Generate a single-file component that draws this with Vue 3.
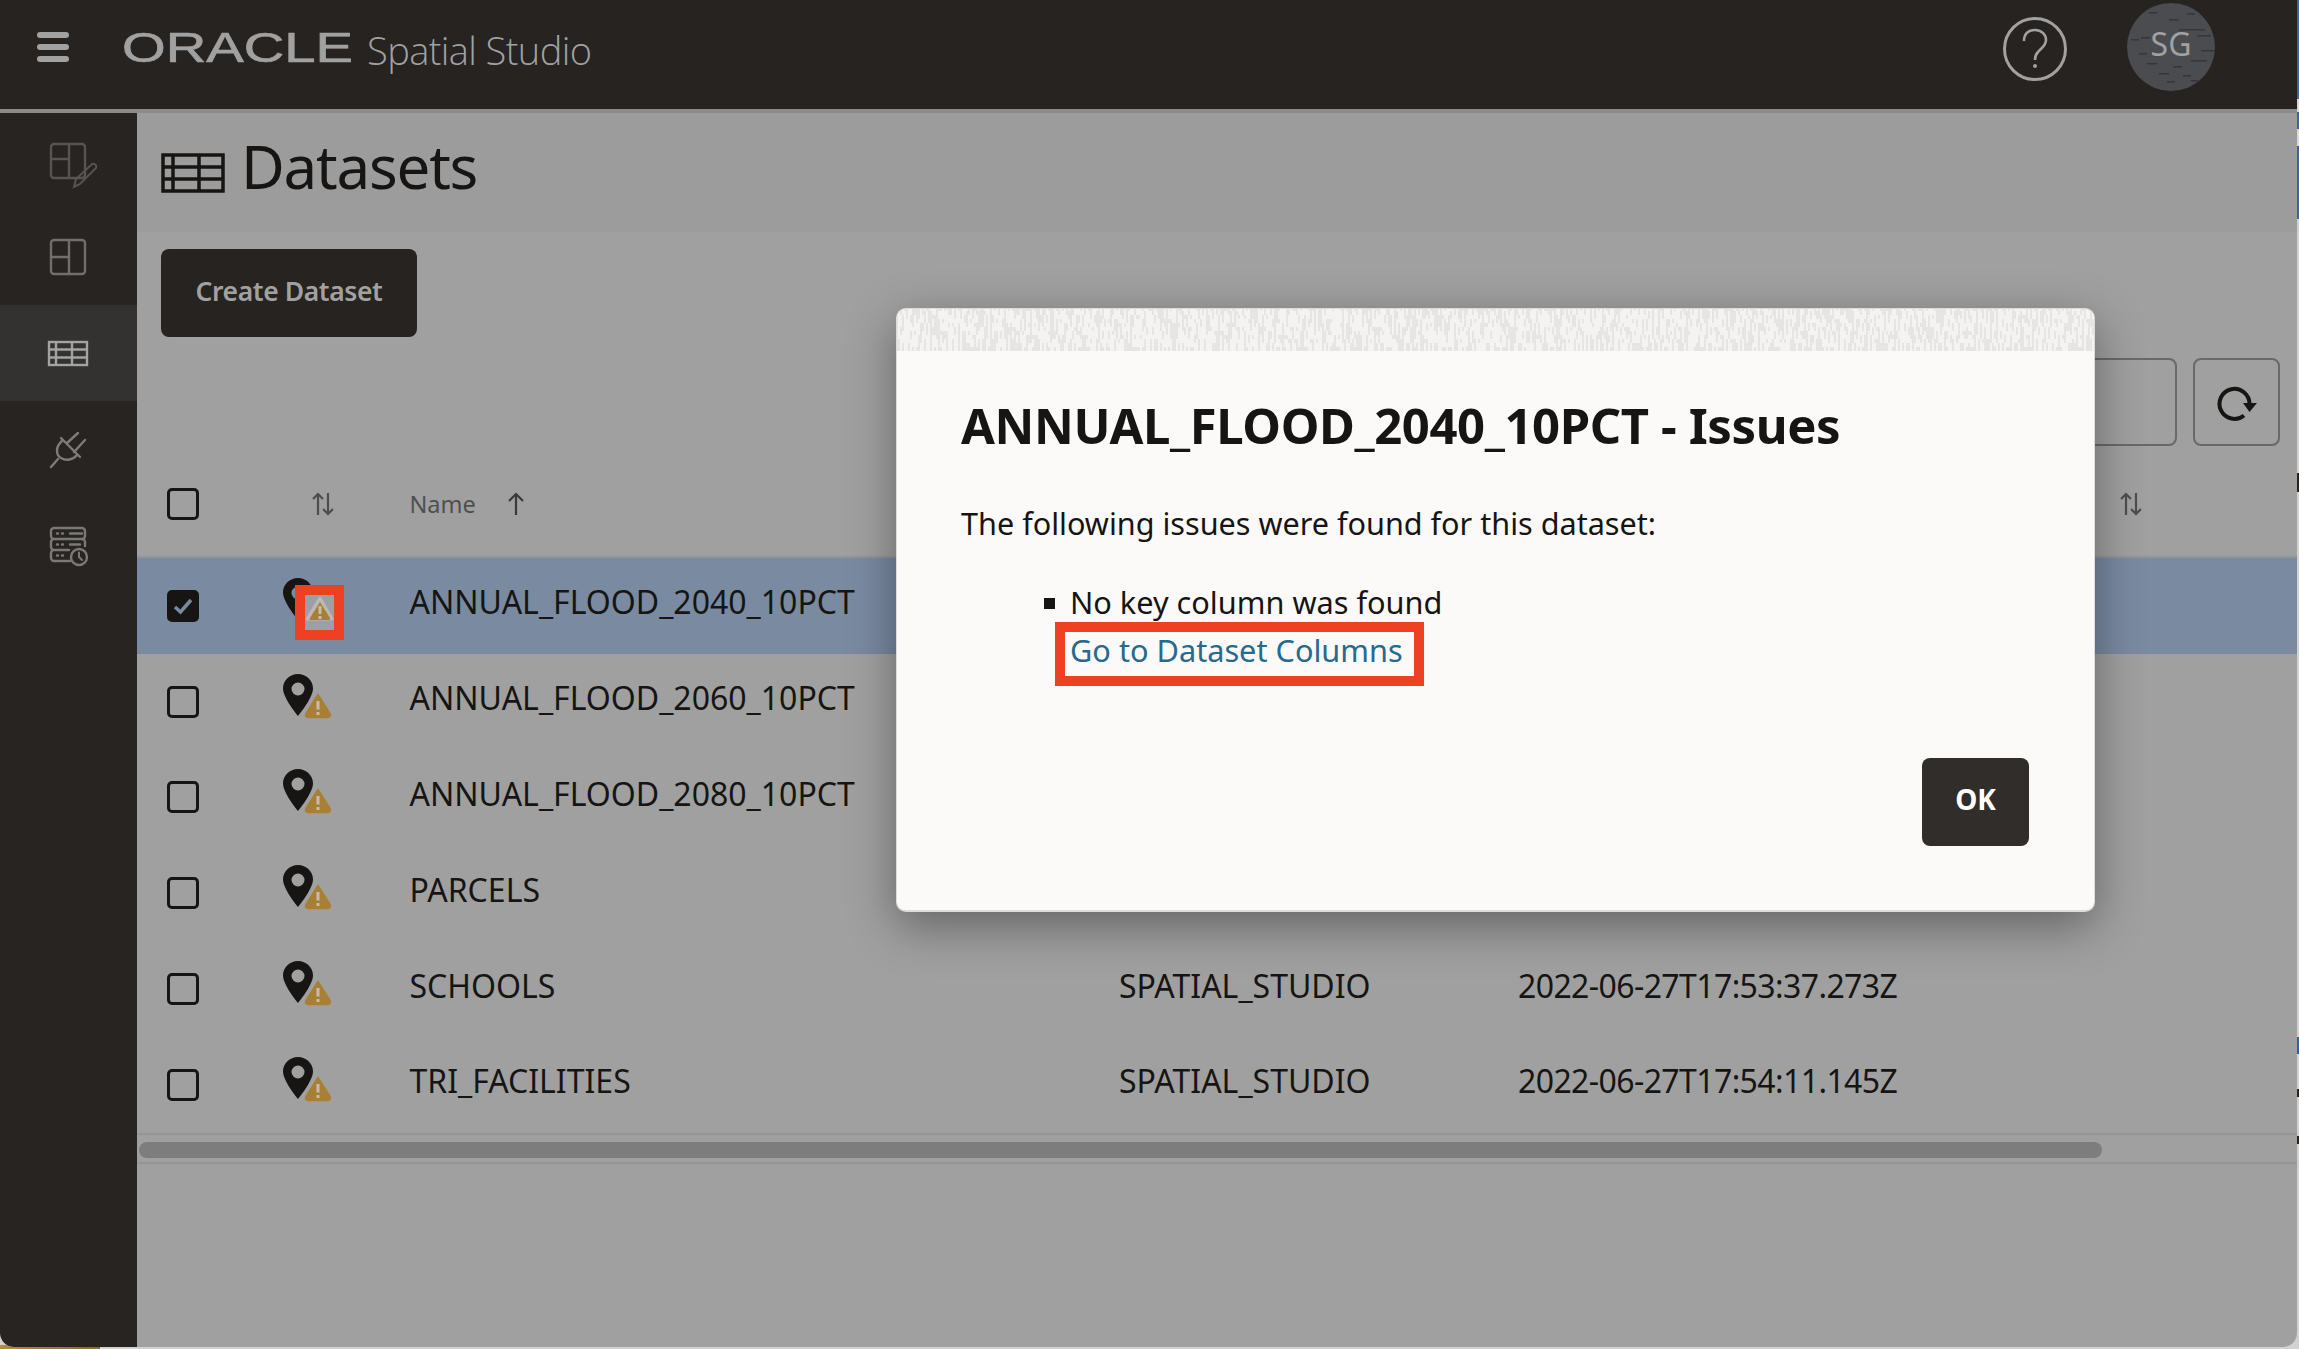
<script setup>
const rows = [
  { name: 'ANNUAL_FLOOD_2040_10PCT', owner: '', created: '', checked: true },
  { name: 'ANNUAL_FLOOD_2060_10PCT', owner: '', created: '', checked: false },
  { name: 'ANNUAL_FLOOD_2080_10PCT', owner: '', created: '', checked: false },
  { name: 'PARCELS', owner: '', created: '', checked: false },
  { name: 'SCHOOLS', owner: 'SPATIAL_STUDIO', created: '2022-06-27T17:53:37.273Z', checked: false },
  { name: 'TRI_FACILITIES', owner: 'SPATIAL_STUDIO', created: '2022-06-27T17:54:11.145Z', checked: false },
]

// little streaks for the dialog's header band
let seed = 17
const rnd = (n) => {
  seed = (seed * 1103 + 12345) % 65536
  return (seed >> 3) % n
}
const streaks = []
for (let i = 0; i < 1500; i++) {
  streaks.push({ x: rnd(1198), y: rnd(44) - 6, w: 1 + rnd(2), h: 6 + rnd(12) })
}

const avatarDashes = [
  [22, 9, 8], [42, 16, 10], [60, 10, 8], [14, 34, 9], [52, 26, 26], [70, 32, 14],
  [4, 36, 8], [74, 47, 14], [64, 57, 16], [20, 60, 10], [46, 63, 9], [32, 70, 10],
  [56, 72, 8], [64, 77, 7], [40, 78, 8], [12, 50, 8],
]
</script>

<template>
  <div class="page">
    <div class="app">
      <header class="topbar">
        <div class="burger"><span></span><span></span><span></span></div>
        <svg class="oracle" width="234" height="52" viewBox="0 0 234 52">
          <text x="0" y="41" textLength="231" lengthAdjust="spacingAndGlyphs">ORACLE</text>
        </svg>
        <span class="product">Spatial Studio</span>
        <div class="topbar-right">
          <svg class="help" width="64" height="64" viewBox="0 0 64 64" fill="none" stroke="#a1a1a1">
            <circle cx="32" cy="32" r="30.500" stroke-width="3" />
            <path d="M21 24C21 16 26 13 32 13C39 13 43 18 43 23C43 29 38 31 35 35C33 37 32 40 32 43" stroke-width="2.600" />
            <circle cx="32" cy="49" r="2" fill="#a1a1a1" stroke="none" />
          </svg>
          <div class="avatar">
            <svg width="88" height="88" viewBox="0 0 88 88">
              <rect v-for="(d, i) in avatarDashes" :key="i" :x="d[0]" :y="d[1]" :width="d[2]" height="1.5" fill="#33363a" />
            </svg>
            <span>SG</span>
          </div>
        </div>
      </header>

      <div class="shell">
        <nav class="sidebar">
          <div class="nav-item">
            <svg width="60" height="60" viewBox="0 0 60 60" fill="none" stroke="#565553" stroke-width="2.4">
              <rect x="12" y="13" width="34" height="34" rx="3" />
              <path d="M30 13V47M12 28H30" />
              <path d="M35 56l2-8L53 33a3 3 0 0 1 4 4L41 53z" stroke-width="2" />
            </svg>
          </div>
          <div class="nav-item">
            <svg width="60" height="60" viewBox="0 0 60 60" fill="none" stroke="#706f6d" stroke-width="2.4">
              <rect x="12" y="13" width="34" height="34" rx="3" />
              <path d="M30 13V47M12 30H30" />
            </svg>
          </div>
          <div class="nav-item active">
            <svg width="60" height="60" viewBox="0 0 60 60" fill="none" stroke="#a3a3a3" stroke-width="2.4">
              <rect x="10" y="19" width="38" height="23" />
              <path d="M10 26.5H48M10 34.5H48M17 19V42M33 19V42" />
            </svg>
          </div>
          <div class="nav-item">
            <svg width="60" height="60" viewBox="0 0 60 60" fill="none" stroke="#7d7c7a" stroke-width="2.4" stroke-linecap="round">
              <path d="M39 14L28 24M46 21L35 33M22 19L41 38M19 40L12 48" />
              <path d="M23 22C16 28 17 36 22 39C27 42 34 41 38 36" />
            </svg>
          </div>
          <div class="nav-item">
            <svg width="60" height="60" viewBox="0 0 60 60" fill="none" stroke="#7a7977" stroke-width="2.4" stroke-linecap="round">
              <path d="M31 46H15a3 3 0 0 1-3-3V38a3 3 0 0 1 3-3H30M15 35a3 3 0 0 1-3-3V27a3 3 0 0 1 3-3H43a3 3 0 0 1 3 3v4M15 24a3 3 0 0 1-3-3V16a3 3 0 0 1 3-3H43a3 3 0 0 1 3 3v5a3 3 0 0 1-3 3" />
              <path d="M31 18.500H43M31 29.500H41M18 18.500H19M23 18.500H24M18 29.500H19M23 29.500H24M18 40.500H19M23 40.500H24" />
              <circle cx="40" cy="42" r="8" />
              <path d="M40 37.500V42L43 45" stroke-width="2" />
            </svg>
          </div>
        </nav>

        <main class="main">
          <div class="title-bar">
            <svg width="64" height="40" viewBox="0 0 64 40" fill="none" stroke="#161513" stroke-width="3.500">
              <rect x="2" y="2" width="60" height="36" />
              <path d="M2 14H62M2 26H62M12 2V38M38 2V38" />
            </svg>
            <h1>Datasets</h1>
          </div>

          <div class="toolbar">
            <button class="create-btn">Create Dataset</button>
            <div class="search-row">
              <div class="search-box"></div>
              <div class="refresh-btn">
                <svg width="44" height="40" viewBox="0 0 44 40" fill="none">
                  <path d="M29 33.500A15 15 0 1 1 34.500 22" stroke="#161513" stroke-width="4" />
                  <path d="M28 21H42L34.500 30z" fill="#161513" />
                </svg>
              </div>
            </div>
          </div>

          <div class="table">
            <div class="table-row table-head">
              <div class="cell-check"><span class="box"></span></div>
              <div class="cell-icon sort-cell">
                <svg class="sort" width="22" height="24" viewBox="0 0 22 24" fill="none" stroke="#4d4d4d" stroke-width="2.200">
                  <path d="M6 23V2M1 7L6 2L11 7M16 1V22M11 17L16 22L21 17" />
                </svg>
              </div>
              <div class="cell-name head-name">
                <span>Name</span>
                <svg width="18" height="24" viewBox="0 0 18 24" fill="none" stroke="#3a3a3a" stroke-width="2.200">
                  <path d="M9 23V2M2 9L9 2L16 9" />
                </svg>
              </div>
              <div></div>
              <div></div>
              <div class="cell-last">
                <svg class="sort" width="22" height="24" viewBox="0 0 22 24" fill="none" stroke="#4d4d4d" stroke-width="2.200">
                  <path d="M6 23V2M1 7L6 2L11 7M16 1V22M11 17L16 22L21 17" />
                </svg>
              </div>
            </div>

            <div v-for="row in rows" :key="row.name" class="table-row" :class="{ selected: row.checked }">
              <div class="cell-check">
                <span class="box" :class="{ on: row.checked }">
                  <svg v-if="row.checked" width="20" height="18" viewBox="0 0 20 18" fill="none" stroke="#7a8aa1" stroke-width="3.500">
                    <path d="M2 10L7.500 15L18 3" />
                  </svg>
                </span>
              </div>
              <div class="cell-icon">
                <svg class="pin" width="50" height="46" viewBox="0 0 50 46">
                  <path fill-rule="evenodd" fill="#161513" d="M15 0C6.700 0 0 6.500 0 14.500C0 24 15 42 15 42C15 42 30 24 30 14.500C30 6.500 23.300 0 15 0ZM15 8.500A6.500 6.500 0 1 1 15 21.500A6.500 6.500 0 1 1 15 8.500Z" />
                  <path d="M35 20.500L47 39.500Q48.500 43 45 43.500H25Q21.500 43 23 39.500Z" fill="#a87f34" stroke="#a87f34" stroke-width="1.500" stroke-linejoin="round" />
                  <path d="M35 27V35.500M35 38V41" stroke="#c4bdb0" stroke-width="3" />
                </svg>
              </div>
              <div class="cell-name">{{ row.name }}</div>
              <div class="cell-owner">{{ row.owner }}</div>
              <div class="cell-created">{{ row.created }}</div>
              <div></div>
            </div>
          </div>

          <div class="scroll-track"><div class="scroll-thumb"></div></div>
        </main>
      </div>

      <!-- the callout around the warning icon in the first row -->
      <div class="callout-icon">
        <div class="callout-bg">
          <svg width="29" height="29" viewBox="0 0 29 29">
            <path d="M15 3L27 24H2Z" fill="#bdb9b0" stroke="#bdb9b0" stroke-width="3" stroke-linejoin="round" />
            <path d="M15 7L25 23Q25.500 25 23 25H6Q4 25 5 23Z" fill="#a87f34" />
            <path d="M15 11V19M15 21V24" stroke="#c4bdb0" stroke-width="3" />
          </svg>
        </div>
      </div>

      <div class="dialog">
        <svg class="dialog-band" width="1198" height="42" viewBox="0 0 1198 42">
          <rect width="1198" height="42" fill="#e6e5e3" />
          <rect v-for="(s, i) in streaks" :key="i" :x="s.x" :y="s.y" :width="s.w" :height="s.h" fill="#f4f3f1" />
        </svg>
        <div class="dialog-body">
          <h2>ANNUAL_FLOOD_2040_10PCT - Issues</h2>
          <p>The following issues were found for this dataset:</p>
          <div class="issue">
            <span class="bullet"></span>
            <div>
              <div>No key column was found</div>
              <a class="issue-link">Go to Dataset Columns</a>
            </div>
          </div>
          <div class="dialog-foot"><button class="ok-btn">OK</button></div>
        </div>
      </div>
      <div class="callout-link"></div>
    </div>
  </div>
</template>

<style scoped>
/* the window behind this one shows as a thin strip right and below */
.page {
  width: 2299px;
  height: 1349px;
  overflow: hidden;
  background:
    linear-gradient(to bottom,
      #3f6596 0, #3f6596 99px, #d8d8d8 99px, #d8d8d8 112px, #3f6596 112px, #3f6596 129px,
      #d8d8d8 129px, #d8d8d8 146px, #3f6596 146px, #3f6596 219px, transparent 219px,
      transparent 473px, #262321 473px, #262321 492px, transparent 492px,
      transparent 1037px, #2f5fb5 1037px, #2f5fb5 1054px, transparent 1054px,
      transparent 1089px, #262321 1089px, #262321 1097px, transparent 1097px,
      transparent 1136px, #262321 1136px, #262321 1144px, transparent 1144px) right top / 2px 100% no-repeat,
    linear-gradient(to right, #b88a3a 0, #8a6a30 100px, transparent 100px) left bottom / 100% 4px no-repeat,
    #d2d2d2;
}
.app {
  position: relative;
  width: 2297px;
  height: 1347px;
  display: flex;
  flex-direction: column;
  overflow: hidden;
  border-radius: 0 0 14px 14px;
  font-family: "Noto Sans", "Open Sans", sans-serif;
  color: #161513;
  background: #a0a0a0;
}
.topbar {
  height: 109px;
  flex: none;
  display: flex;
  align-items: flex-start;
  background: #262321;
  border-bottom: 4px solid #8c8c8c;
  color: #a1a1a1;
}
.burger {
  margin: 32px 0 0 37px;
  width: 32px;
  display: flex;
  flex-direction: column;
  gap: 6px;
}
.burger span {
  height: 6px;
  border-radius: 3px;
  background: #a1a1a1;
}
.oracle {
  margin: 21px 0 0 53px;
  flex: none;
}
.oracle text {
  font-family: "Liberation Sans", sans-serif;
  font-size: 43px;
  fill: #a1a1a1;
  stroke: #a1a1a1;
  stroke-width: 0.7px;
}
.product {
  margin: 25px 0 0 11px;
  font-family: "Open Sans", sans-serif;
  font-weight: 300;
  font-size: 38px;
  line-height: 50px;
  letter-spacing: -0.6px;
}
.topbar-right {
  margin-left: auto;
  margin-right: 82px;
  display: flex;
  gap: 60px;
}
.help {
  margin-top: 17px;
}
.avatar {
  position: relative;
  margin-top: 3px;
  width: 88px;
  height: 88px;
  border-radius: 50%;
  overflow: hidden;
  background: #4a4c4f;
  font-size: 32px;
  line-height: 81px;
  text-align: center;
}
.avatar svg {
  position: absolute;
  left: 0;
  top: 0;
}
.avatar span {
  position: relative;
}
.shell {
  flex: 1;
  display: flex;
  min-height: 0;
}
.sidebar {
  width: 137px;
  flex: none;
  background: #272421;
  border-bottom-left-radius: 14px;
}
.nav-item {
  height: 96px;
  display: flex;
  align-items: center;
  justify-content: center;
}
.nav-item.active {
  background: #333231;
}
.main {
  flex: 1;
  min-width: 0;
  display: flex;
  flex-direction: column;
}
.title-bar {
  height: 119px;
  flex: none;
  box-sizing: border-box;
  padding: 40px 0 0 24px;
  display: flex;
  align-items: flex-start;
  gap: 16px;
  background: #9c9c9c;
}
.title-bar h1 {
  margin: -27px 0 0;
  font-size: 60px;
  font-weight: 400;
  line-height: 80px;
  letter-spacing: -1.2px;
}
.toolbar {
  padding: 17px 17px 0 24px;
  display: flex;
  flex-direction: column;
}
.create-btn {
  width: 256px;
  height: 88px;
  padding: 0 0 5px;
  border: none;
  border-radius: 8px;
  background: #262321;
  color: #a1a1a1;
  font-family: inherit;
  font-size: 26.500px;
  font-weight: 600;
  letter-spacing: -0.4px;
}
.search-row {
  margin-top: 21px;
  display: flex;
  justify-content: flex-end;
  gap: 16px;
}
.search-box {
  width: 400px;
  height: 88px;
  box-sizing: border-box;
  border: 2px solid #696969;
  border-radius: 8px;
}
.refresh-btn {
  width: 87px;
  height: 88px;
  box-sizing: border-box;
  border: 2px solid #696969;
  border-radius: 8px;
  display: flex;
  align-items: center;
  justify-content: center;
}
.table {
  margin-top: 4px;
  height: 684px;
}
.table-row {
  height: 95.800px;
  display: grid;
  grid-template-columns: 146px 126.500px 709.500px 399px 1fr 177px;
  align-items: center;
  font-size: 32px;
}
.table-head {
  height: 108px;
  box-sizing: border-box;
  padding-top: 2px;
  border-bottom: 2px solid #959595;
  font-size: 23.500px;
  color: #4f4f4f;
}
.selected {
  background: #7a8aa1;
}
.cell-check {
  padding-left: 30px;
  display: flex;
}
.box {
  width: 32px;
  height: 32px;
  box-sizing: border-box;
  border: 3px solid #161513;
  border-radius: 5px;
  display: flex;
  align-items: center;
  justify-content: center;
}
.box.on {
  background: #161513;
}
.cell-icon {
  display: flex;
}
.pin {
  margin: 0 0 10px 0;
}
.sort-cell {
  padding-left: 29px;
}
.cell-name,
.cell-owner,
.cell-created {
  padding-bottom: 8px;
}
.cell-created {
  letter-spacing: -0.6px;
}
.head-name {
  padding-bottom: 0;
  display: flex;
  align-items: center;
  gap: 31px;
}
.cell-last {
  display: flex;
}
.scroll-track {
  flex: none;
  height: 16px;
  margin-top: -1px;
  padding: 7px 0 4px 2px;
  border-top: 2px solid #959595;
  border-bottom: 2px solid #959595;
}
.scroll-thumb {
  width: 1963px;
  height: 16px;
  border-radius: 8px;
  background: #7d7d7d;
}
.callout-icon {
  position: absolute;
  left: 295px;
  top: 585px;
  width: 49px;
  height: 55px;
  box-sizing: border-box;
  border: 10px solid #ee4023;
  background: #9aa0a8;
}
.callout-bg {
  display: flex;
}
.dialog {
  position: absolute;
  left: 896px;
  top: 308px;
  width: 1199px;
  height: 604px;
  box-sizing: border-box;
  border-radius: 10px;
  overflow: hidden;
  background: #fbfaf8;
  border: 1px solid #dedcd9;
  border-bottom-width: 2px;
  box-shadow: 0 14px 48px rgba(0, 0, 0, 0.38);
  display: flex;
  flex-direction: column;
}
.dialog-band {
  flex: none;
  display: block;
}
.dialog-body {
  flex: 1;
  padding: 0 65px 0 64px;
  display: flex;
  flex-direction: column;
}
.dialog-body h2 {
  margin: 45px 0 0;
  font-size: 49px;
  font-weight: 700;
  line-height: 58px;
  letter-spacing: -0.4px;
}
.dialog-body p {
  margin: 47px 0 0;
  font-size: 30.600px;
  line-height: 44px;
}
.issue {
  margin: 33px 0 0 83px;
  display: flex;
  gap: 15px;
  font-size: 30.700px;
  line-height: 48px;
}
.bullet {
  flex: none;
  margin-top: 20px;
  width: 11px;
  height: 11px;
  background: #161513;
}
.issue-link {
  color: #27698f;
}
.dialog-foot {
  margin-top: auto;
  margin-bottom: 64px;
  display: flex;
  justify-content: flex-end;
}
.ok-btn {
  width: 107px;
  height: 88px;
  padding: 0 0 6px;
  border: none;
  border-radius: 8px;
  background: #312d2a;
  color: #fff;
  font-family: inherit;
  font-size: 28px;
  font-weight: 700;
}
.callout-link {
  position: absolute;
  left: 1055px;
  top: 622px;
  width: 369px;
  height: 64px;
  box-sizing: border-box;
  border: 10px solid #ee4023;
}
</style>
